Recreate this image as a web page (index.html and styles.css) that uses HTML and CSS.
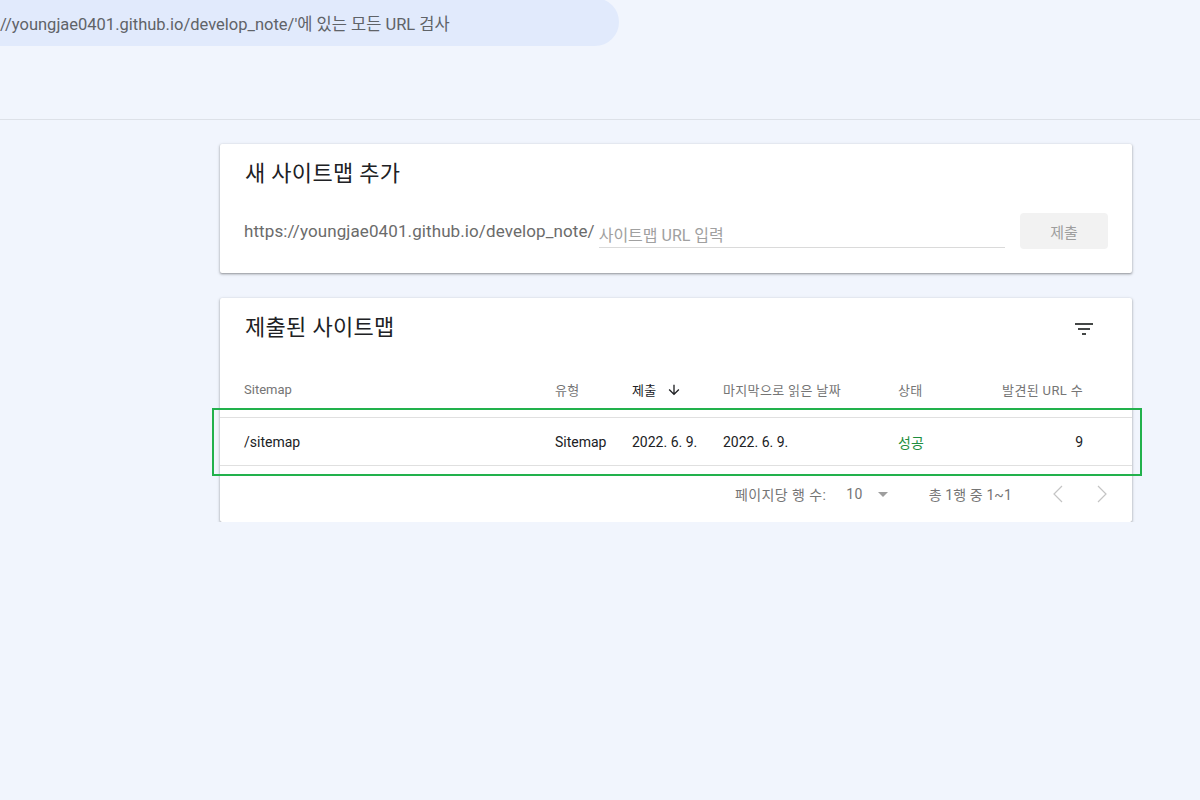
FILE: index.html
```html
<!DOCTYPE html>
<html lang="ko">

<head>
    <meta charset="UTF-8">
    <meta name="viewport" content="width=device-width, initial-scale=1.0">
    <title>Sitemaps</title>
    <link rel="stylesheet" href="styles.css">
</head>

<body>

    <header class="topbar">
        <div class="search-pill">//youngjae0401.github.io/develop_note/'에 있는 모든 URL 검사</div>
    </header>

    <main class="content">
        <!-- add sitemap -->
        <section class="card add-card">
            <h2 class="card-title">새 사이트맵 추가</h2>
            <div class="add-row">
                <span class="prefix">https://youngjae0401.github.io/develop_note/</span>
                <input class="sitemap-input" type="text" placeholder="사이트맵 URL 입력">
                <button class="submit-btn" disabled>제출</button>
            </div>
        </section>

        <!-- submitted sitemaps -->
        <section class="card list-card">
            <div class="list-head">
                <h2 class="card-title">제출된 사이트맵</h2>
                <svg class="filter-icon" width="24" height="24" viewBox="0 0 24 24">
                    <path d="M10 18h4v-2h-4v2zM3 6v2h18V6H3zm3 7h12v-2H6v2z" fill="#444746" />
                </svg>
            </div>

            <div class="table">
                <div class="table-row table-header">
                    <span>Sitemap</span>
                    <span class="ko">유형</span>
                    <span class="sorted ko">제출
                        <svg width="16" height="16" viewBox="0 0 24 24">
                            <path d="M20 12l-1.41-1.41L13 16.17V4h-2v12.17l-5.58-5.59L4 12l8 8 8-8z" fill="#202124" />
                        </svg>
                    </span>
                    <span class="ko">마지막으로 읽은 날짜</span>
                    <span class="ko">상태</span>
                    <span class="num ko">발견된 URL 수</span>
                </div>
                <div class="table-row table-body">
                    <span>/sitemap</span>
                    <span>Sitemap</span>
                    <span>2022. 6. 9.</span>
                    <span>2022. 6. 9.</span>
                    <span class="status-ok">성공</span>
                    <span class="num">9</span>
                </div>
            </div>

            <div class="pager">
                <span class="pager-label">페이지당 행 수:</span>
                <span class="pager-select">10
                    <svg width="24" height="24" viewBox="0 0 24 24">
                        <path d="M7 10l5 5 5-5z" fill="#9e9e9e" />
                    </svg>
                </span>
                <span class="pager-range">총 1행 중 1~1</span>
                <span class="pager-nav">
                    <svg width="24" height="24" viewBox="0 0 24 24">
                        <path d="M16 4l-8 8 8 8" fill="none" stroke="#c4c4c4" stroke-width="1.2" />
                    </svg>
                    <svg width="24" height="24" viewBox="0 0 24 24">
                        <path d="M8 4l8 8-8 8" fill="none" stroke="#c4c4c4" stroke-width="1.2" />
                    </svg>
                </span>
            </div>
        </section>
    </main>

    <!-- highlight around the sitemap row -->
    <div class="highlight"></div>

</body>

</html>
```

FILE: styles.css
```css
body {
    margin: 0;
    padding: 0;
    background-color: #f1f5fd;
    font-family: Roboto, "Noto Sans CJK KR", sans-serif;
    color: #202124;
}

.topbar {
    display: flow-root;
    height: 119px;
    border-bottom: 1px solid #dde1e8;
}

.search-pill {
    width: 619px;
    height: 48px;
    margin-top: -2px;
    box-sizing: border-box;
    background-color: #e1eafc;
    border-radius: 0 24px 24px 0;
    font-size: 16.5px;
    line-height: 54px;
    color: #5f6368;
    white-space: nowrap;
    overflow: hidden;
}

.content {
    padding: 24px 0 0 220px;
}

.card {
    width: 912px;
    background-color: #fff;
    border-radius: 2px;
    box-shadow: 0 1px 2px rgba(0, 0, 0, 0.3), 0 1px 3px 1px rgba(0, 0, 0, 0.1);
}

.card-title {
    margin: 0;
    font-size: 22px;
    font-weight: 400;
    line-height: 28px;
    color: #202124;
    letter-spacing: 0.3px;
}

.add-card {
    padding: 16px 24px 24px 25px;
    box-sizing: border-box;
    height: 129px;
}

.add-row {
    display: flex;
    align-items: center;
    margin-top: 25px;
}

.prefix {
    font-size: 17px;
    letter-spacing: 0.1px;
    color: #6b6b6b;
    margin-left: -1px;
    margin-right: 4px;
}

.sitemap-input {
    width: 406px;
    border: none;
    border-bottom: 1px solid #dadada;
    padding: 6px 0 2px;
    margin-top: 6px;
    font-family: inherit;
    font-size: 16px;
    outline: none;
    background: transparent;
}

.sitemap-input::placeholder {
    color: #a0a0a0;
}

.submit-btn {
    margin-left: auto;
    width: 88px;
    height: 36px;
    border: none;
    border-radius: 4px;
    background-color: #f2f2f2;
    color: #9e9e9e;
    font-family: inherit;
    font-size: 15px;
}

.list-card {
    margin-top: 25px;
}

.list-head {
    display: flex;
    align-items: center;
    justify-content: space-between;
    padding: 16px 36px 20px 25px;
}

.filter-icon {
    margin-top: 2px;
}

.table-row {
    display: grid;
    grid-template-columns: 311px 77px 91px 175px 1fr 1fr;
    align-items: center;
    padding: 0 49px 0 24px;
    border-bottom: 1px solid #e0e0e0;
}

.table-header {
    height: 55px;
    font-size: 13px;
    color: #757575;
}

.table-header .ko {
    letter-spacing: 0.35px;
}

.table-header .sorted {
    color: #202124;
    display: flex;
    align-items: center;
    gap: 9px;
}

.table-body {
    height: 47px;
    font-size: 14px;
    color: #202124;
}

.num {
    text-align: right;
}

.status-ok {
    color: #1e8e3e;
}

.pager {
    display: flex;
    align-items: center;
    height: 56px;
    padding-left: 515px;
    font-size: 14px;
    letter-spacing: 0.4px;
    color: #757575;
}

.pager-select {
    display: flex;
    align-items: center;
    margin-left: 20px;
    gap: 8px;
}

.pager-range {
    margin-left: 34px;
    letter-spacing: 0.1px;
}

.pager-nav {
    display: flex;
    gap: 20px;
    margin-left: 34px;
}

.highlight {
    position: absolute;
    left: 212px;
    top: 408px;
    width: 926px;
    height: 64px;
    border: 2px solid #22b14c;
}
```
